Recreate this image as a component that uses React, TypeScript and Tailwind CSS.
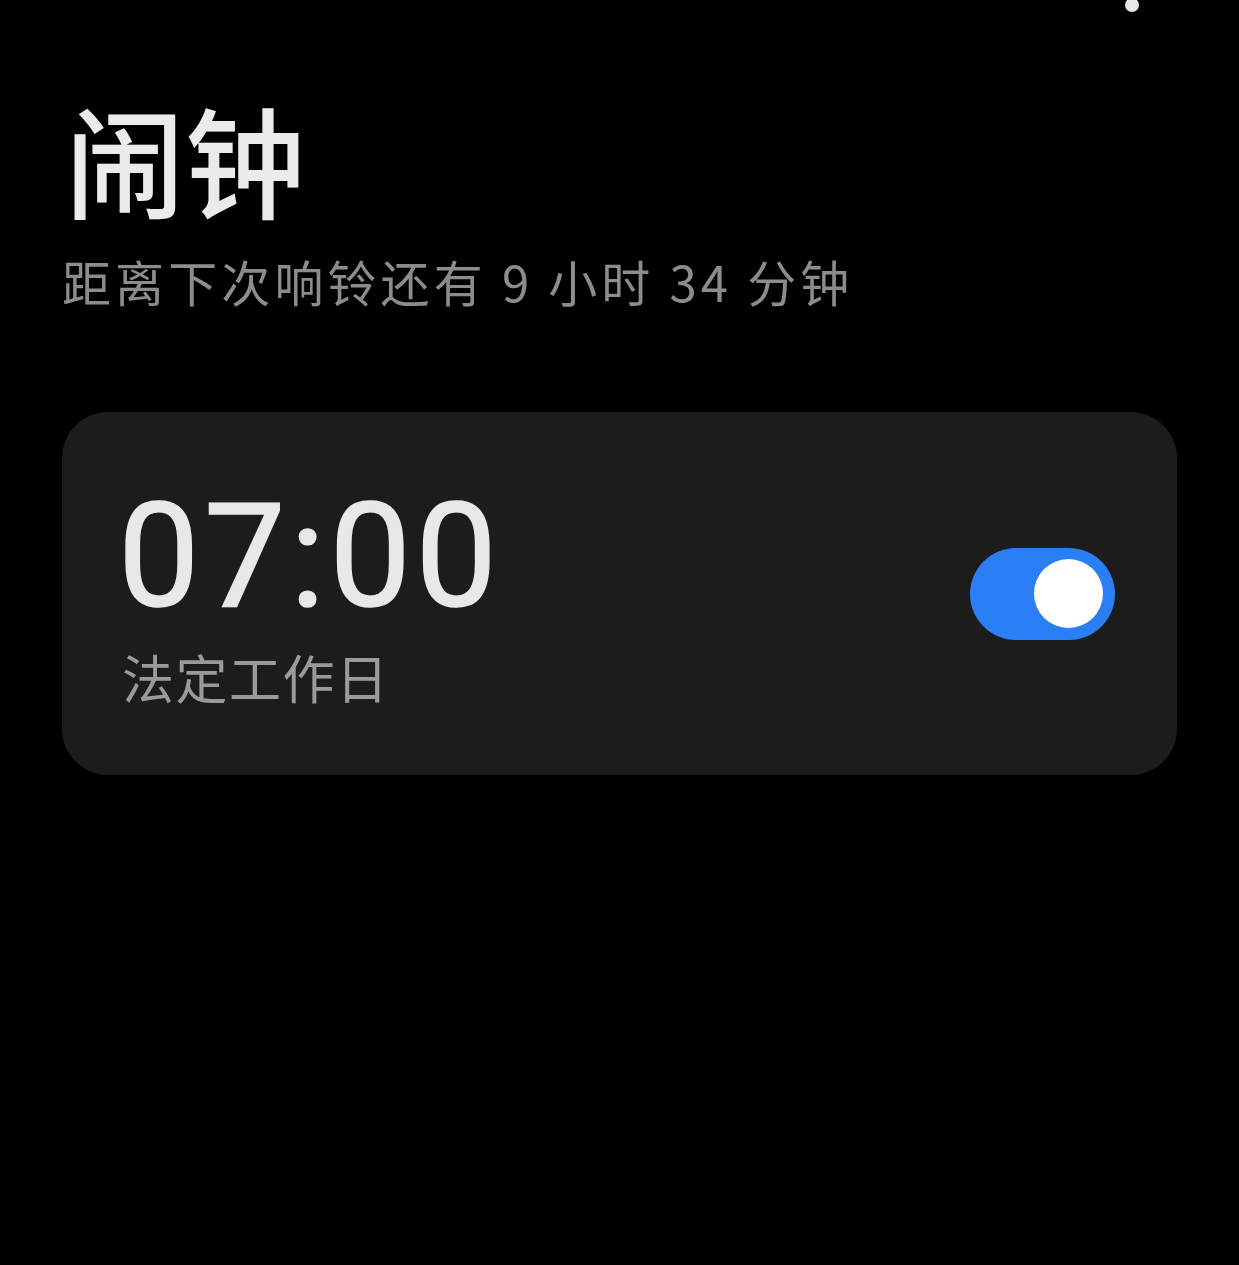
export default function App() {
  return (
    <div
      className="relative w-[1239px] h-[1265px] bg-black overflow-hidden"
      style={{ fontFamily: 'Roboto, "Noto Sans CJK SC", sans-serif' }}
    >
      {/* status dot */}
      <div className="absolute left-[1125px] top-[-2px] w-[14px] h-[14px] rounded-full bg-[#e8e8e8]" />

      <div className="pl-[62px] pr-[62px] pt-[98px]">
        <h1 className="pl-[3px] text-[120px] leading-none font-medium text-[#ebebeb] font-['Noto_Sans_CJK_SC',sans-serif]">
          闹钟
        </h1>
        <p className="mt-[38px] text-[49px] leading-none tracking-[4.1px] text-[#8c8c8c] font-['Noto_Sans_CJK_SC',sans-serif]">
          距离下次响铃还有 9 小时 34 分钟
        </p>

        <div className="mt-[107px] w-[1115px] h-[363px] rounded-[46px] bg-[#1c1c1c] flex items-center justify-between pl-[56px] pr-[62px]">
          <div className="flex flex-col">
            <span className="text-[145px] leading-none font-normal tracking-[4.5px] text-[#e8e8e8] font-['Roboto',sans-serif] [-webkit-text-stroke:1.5px_#e8e8e8]">
              07:00
            </span>
            <span className="mt-[22px] pl-[4px] text-[52px] leading-none tracking-[1.5px] text-[#9a9a9a] font-['Noto_Sans_CJK_SC',sans-serif]">
              法定工作日
            </span>
          </div>
          <div className="w-[145px] h-[92px] rounded-full bg-[#2a7ff5] flex items-center justify-end pr-[12px]">
            <div className="w-[69px] h-[69px] rounded-full bg-white" />
          </div>
        </div>
      </div>
    </div>
  );
}
